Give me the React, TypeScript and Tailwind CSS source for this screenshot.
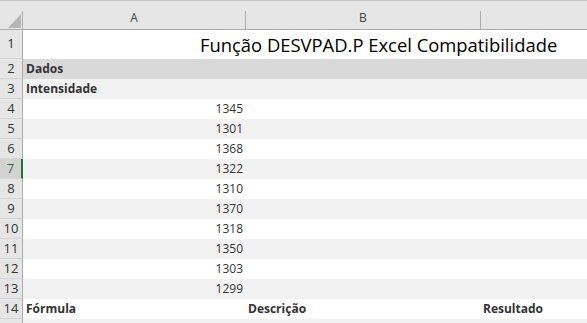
const values = [1345, 1301, 1368, 1322, 1310, 1370, 1318, 1350, 1303, 1299]

function RowHead({ n, selected }: { n?: number; selected?: boolean }) {
  return (
    <div
      className={`w-[23px] shrink-0 flex items-center justify-center border-b border-[#d4d4d4] text-[13px] ${
        selected
          ? 'bg-[#d2d2d2] text-[#1e6b3e] border-r-2 border-r-[#217346]'
          : 'bg-[#e6e6e6] text-[#333333] border-r border-r-[#ababab]'
      }`}
    >
      {n}
    </div>
  )
}

export default function App() {
  return (
    <div className="w-[587px] h-[323px] overflow-hidden bg-white font-['Open_Sans',sans-serif] select-none">
      {/* column headers */}
      <div className="h-px bg-[#c8c8c8]" />
      <div className="flex h-[29px] bg-[#e6e6e6] border-b border-[#ababab]">
        <div className="w-[23px] shrink-0 relative border-r border-[#ababab] mt-[10px]">
          <div className="absolute left-[8px] top-[3px] w-0 h-0 border-l-[13px] border-l-transparent border-b-[14px] border-b-[#b5b5b5]" />
        </div>
        <div className="w-[222px] shrink-0 flex items-end justify-center pb-[2px] text-[12px] text-[#444444]">
          A
        </div>
        <div className="w-px bg-[#ababab] mt-[10px]" />
        <div className="w-[234px] shrink-0 flex items-end justify-center pb-[2px] text-[12px] text-[#444444]">
          B
        </div>
        <div className="w-px bg-[#ababab] mt-[10px]" />
        <div className="flex-1" />
      </div>

      {/* row 1 */}
      <div className="flex h-[29px]">
        <RowHead n={1} />
        <div className="flex-1 flex items-center pl-[177px] text-[18.4px] text-black whitespace-nowrap">
          Função DESVPAD.P Excel Compatibilidade
        </div>
      </div>

      {/* row 2 */}
      <div className="flex h-[20px]">
        <RowHead n={2} />
        <div className="flex-1 bg-[#d9d9d9] flex items-center pl-[3px] text-[12px] font-bold text-[#333333]">
          Dados
        </div>
      </div>

      {/* row 3 */}
      <div className="flex h-[20px]">
        <RowHead n={3} />
        <div className="flex-1 bg-[#f2f2f2] flex items-center pl-[3px] text-[12px] font-bold text-[#333333]">
          Intensidade
        </div>
      </div>

      {values.map((v, i) => (
        <div key={v} className="flex h-[20px]">
          <RowHead n={i + 4} selected={i + 4 === 7} />
          <div className={`flex-1 flex items-center ${i % 2 === 0 ? 'bg-white' : 'bg-[#f2f2f2]'}`}>
            <div className="w-[222px] text-right pr-[2px] text-[12px] text-[#333333]">{v}</div>
          </div>
        </div>
      ))}

      {/* row 14 */}
      <div className="flex h-[20px]">
        <RowHead n={14} />
        <div className="flex-1 flex items-center text-[12px] font-bold text-[#333333]">
          <div className="w-[222px] pl-[3px]">Fórmula</div>
          <div className="w-[235px] pl-[3px]">Descrição</div>
          <div className="flex-1 pl-[3px]">Resultado</div>
        </div>
      </div>

      {/* row 15, only its top edge shows */}
      <div className="flex h-[20px]">
        <RowHead />
        <div className="flex-1 bg-[#f2f2f2]" />
      </div>
    </div>
  )
}
